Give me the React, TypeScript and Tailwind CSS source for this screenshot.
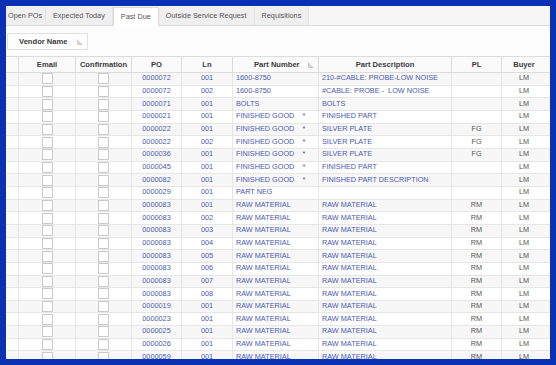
import React from "react";

type Row = {
  po: string;
  ln: string;
  part: string;
  star?: boolean;
  desc: string;
  pl: string;
};

const rows: Row[] = [
  { po: "0000072", ln: "001", part: "1600-8750", desc: "210-#CABLE: PROBE-LOW NOISE", pl: "" },
  { po: "0000072", ln: "002", part: "1600-8750", desc: "#CABLE: PROBE -  LOW NOISE", pl: "" },
  { po: "0000071", ln: "001", part: "BOLTS", desc: "BOLTS", pl: "" },
  { po: "0000021", ln: "001", part: "FINISHED GOOD", star: true, desc: "FINISHED PART", pl: "" },
  { po: "0000022", ln: "001", part: "FINISHED GOOD", star: true, desc: "SILVER PLATE", pl: "FG" },
  { po: "0000022", ln: "002", part: "FINISHED GOOD", star: true, desc: "SILVER PLATE", pl: "FG" },
  { po: "0000036", ln: "001", part: "FINISHED GOOD", star: true, desc: "SILVER PLATE", pl: "FG" },
  { po: "0000045", ln: "001", part: "FINISHED GOOD", star: true, desc: "FINISHED PART", pl: "" },
  { po: "0000082", ln: "001", part: "FINISHED GOOD", star: true, desc: "FINISHED PART DESCRIPTION", pl: "" },
  { po: "0000029", ln: "001", part: "PART NEG", desc: "", pl: "" },
  { po: "0000083", ln: "001", part: "RAW MATERIAL", desc: "RAW MATERIAL", pl: "RM" },
  { po: "0000083", ln: "002", part: "RAW MATERIAL", desc: "RAW MATERIAL", pl: "RM" },
  { po: "0000083", ln: "003", part: "RAW MATERIAL", desc: "RAW MATERIAL", pl: "RM" },
  { po: "0000083", ln: "004", part: "RAW MATERIAL", desc: "RAW MATERIAL", pl: "RM" },
  { po: "0000083", ln: "005", part: "RAW MATERIAL", desc: "RAW MATERIAL", pl: "RM" },
  { po: "0000083", ln: "006", part: "RAW MATERIAL", desc: "RAW MATERIAL", pl: "RM" },
  { po: "0000083", ln: "007", part: "RAW MATERIAL", desc: "RAW MATERIAL", pl: "RM" },
  { po: "0000083", ln: "008", part: "RAW MATERIAL", desc: "RAW MATERIAL", pl: "RM" },
  { po: "0000019", ln: "001", part: "RAW MATERIAL", desc: "RAW MATERIAL", pl: "RM" },
  { po: "0000023", ln: "001", part: "RAW MATERIAL", desc: "RAW MATERIAL", pl: "RM" },
  { po: "0000025", ln: "001", part: "RAW MATERIAL", desc: "RAW MATERIAL", pl: "RM" },
  { po: "0000026", ln: "001", part: "RAW MATERIAL", desc: "RAW MATERIAL", pl: "RM" },
  { po: "0000059", ln: "001", part: "RAW MATERIAL", desc: "RAW MATERIAL", pl: "RM" },
];

const tabs = ["Open POs", "Expected Today", "Past Due", "Outside Service Request", "Requisitions"];

// grid columns: indicator, email, confirmation, PO, Ln, part, desc, PL, buyer
const cols = "grid grid-cols-[13px_57px_56px_50px_51px_86px_133px_50px_44px]";

const SortGlyph = () => (
  <svg width="6" height="6" viewBox="0 0 6 6" className="shrink-0">
    <path d="M0.5 0.5 L0.5 5.5 L5.5 5.5 Z" fill="#d4d4d4" />
    <path d="M0.5 0.5 L0.5 5.5 L5.5 5.5" fill="none" stroke="#c4c4c4" strokeWidth="0.8" />
  </svg>
);

const Box = () => <div className="w-[11px] h-[11px] bg-white border border-[#cacaca]" />;

export default function App() {
  return (
    <div
      className="w-[556px] h-[365px] bg-[#0a31b4] p-[6px] overflow-hidden"
      style={{ fontFamily: '"Liberation Sans", Arial, sans-serif' }}
    >
      <div className="w-[544px] h-[353px] bg-white overflow-hidden flex flex-col">
        {/* tab strip */}
        <div className="h-[20px] shrink-0 flex items-end bg-[#f6f6f6] border-b border-[#d9d9d9] pt-[2px]">
          {tabs.map((t, i) => {
            const active = t === "Past Due";
            return (
              <div
                key={t}
                className={`h-[18px] flex items-center text-[7.3px] text-[#555] whitespace-nowrap ${
                  i === 0 ? "pl-[2px] pr-[6px] w-[40px]" : "px-[7px]"
                } ${
                  active
                    ? "bg-white border-x border-t border-[#d9d9d9] -mb-px h-[19px]"
                    : "bg-[#efefef] border-r border-[#e2e2e2]"
                }`}
              >
                {t}
              </div>
            );
          })}
        </div>

        {/* group panel */}
        <div className="h-[30px] shrink-0 flex items-center pl-[1px] bg-[#fdfdfd]">
          <div className="h-[17px] w-[81px] border border-[#e0e0e0] bg-white flex items-center pl-[11px] gap-[9px] mt-[1px]">
            <span className="text-[7.6px] font-bold text-[#3a3a3a] whitespace-nowrap">Vendor Name</span>
            <SortGlyph />
          </div>
        </div>

        {/* header */}
        <div className={`${cols} h-[17px] shrink-0 border-y border-[#dcdcdc] bg-[#fafafa] text-[7.6px] font-bold text-[#3a3a3a]`}>
          <div className="border-r border-[#dcdcdc]" />
          <div className="flex items-center justify-center border-r border-[#dcdcdc]">Email</div>
          <div className="flex items-center justify-center border-r border-[#dcdcdc]">Confirmation</div>
          <div className="flex items-center justify-center border-r border-[#dcdcdc]">PO</div>
          <div className="flex items-center justify-center border-r border-[#dcdcdc]">Ln</div>
          <div className="flex items-center justify-between pl-[21px] pr-[4px] border-r border-[#dcdcdc]">
            <span>Part Number</span>
            <SortGlyph />
          </div>
          <div className="flex items-center justify-center border-r border-[#dcdcdc]">Part Description</div>
          <div className="flex items-center justify-center border-r border-[#dcdcdc]">PL</div>
          <div className="flex items-center justify-center">Buyer</div>
        </div>

        {/* body */}
        <div className="flex flex-col text-[7.3px]">
          {rows.map((r, i) => (
            <div
              key={i}
              className={`${cols} h-[12.67px] shrink-0 border-b border-[#e6e6e6] ${
                i % 2 === 0 ? "bg-[#f7f7f7]" : "bg-white"
              }`}
            >
              <div className="border-r border-[#e6e6e6]" />
              <div className="flex items-center justify-center border-r border-[#e6e6e6]">
                <Box />
              </div>
              <div className="flex items-center justify-center border-r border-[#e6e6e6]">
                <Box />
              </div>
              <div className="flex items-center justify-center border-r border-[#e6e6e6] text-[#4a5ab0]">{r.po}</div>
              <div className="flex items-center justify-center border-r border-[#e6e6e6] text-[#4a5ab0]">{r.ln}</div>
              <div className="flex items-center pl-[3px] border-r border-[#e6e6e6] text-[#4a5ab0] whitespace-nowrap overflow-hidden">
                <span>{r.part}</span>
                {r.star && <span className="ml-[8px]">*</span>}
              </div>
              <div className="flex items-center pl-[3px] border-r border-[#e6e6e6] text-[#4a5ab0] whitespace-pre overflow-hidden">
                {r.desc}
              </div>
              <div className="flex items-center justify-center border-r border-[#e6e6e6] text-[#555]">{r.pl}</div>
              <div className="flex items-center justify-center text-[#555]">LM</div>
            </div>
          ))}
        </div>
      </div>
    </div>
  );
}
